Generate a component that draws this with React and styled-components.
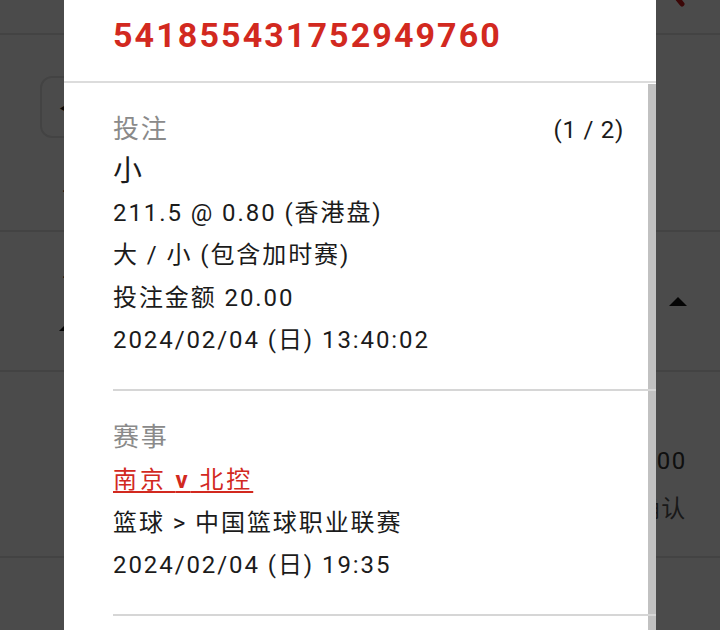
import React from "react";
import styled, { createGlobalStyle } from "styled-components";

const Global = createGlobalStyle`
  html, body { margin: 0; padding: 0; background: #fff; }
  body { font-family: Roboto, "Noto Sans CJK SC", sans-serif; overflow: hidden; }
`;

const RED = "#d2291f";

/* ---------- background page (under the dim overlay) ---------- */
const Page = styled.div`
  position: relative;
  width: 720px;
  height: 630px;
  overflow: hidden;
  background: #fff;
  color: #333;
`;

const TopBar = styled.header`
  height: 35px;
  box-sizing: border-box;
  border-bottom: 2px solid #e4e4e4;
  display: flex;
  justify-content: flex-end;
  align-items: flex-start;
  padding-right: 34px;
`;

const Row = styled.section`
  box-sizing: border-box;
  height: ${(p) => p.$h}px;
  border-bottom: 2px solid #e4e4e4;
  display: flex;
  justify-content: space-between;
  align-items: ${(p) => p.$align || "flex-start"};
  padding: ${(p) => p.$pad || "0"};
`;

const LeftCol = styled.div`
  display: flex;
  flex-direction: column;
  gap: ${(p) => p.$gap || 0}px;
  padding-left: ${(p) => p.$left || 0}px;
`;

const RightCol = styled.div`
  display: flex;
  flex-direction: column;
  align-items: flex-end;
  padding-right: 33px;
  padding-top: ${(p) => p.$top || 0}px;
  gap: 18px;
`;

const BackButton = styled.div`
  width: 90px;
  height: 62px;
  box-sizing: border-box;
  border: 2px solid #e2e2e2;
  border-radius: 12px;
  display: flex;
  align-items: center;
  padding-left: 17px;
  margin-left: 40px;
  color: #222;
  font-size: 14px;
`;

const BgText = styled.div`
  font-size: 24px;
  line-height: 30px;
  letter-spacing: 0.07em;
  color: ${(p) => p.$color || "#333"};
  padding-left: ${(p) => p.$left || 0}px;
`;

const SortArrow = styled.div`
  width: 0;
  height: 0;
  margin-left: ${(p) => p.$shift || 0}px;
  border-left: 9px solid transparent;
  border-right: 9px solid transparent;
  border-bottom: 9px solid #111;
`;

const Overlay = styled.div`
  position: absolute;
  inset: 0;
  background: rgba(0, 0, 0, 0.706);
`;

/* ---------- modal ---------- */
const Modal = styled.div`
  position: absolute;
  top: 0;
  left: 64px;
  width: 592px;
  bottom: -80px;
  background: #fff;
  display: flex;
  flex-direction: column;
  overflow: hidden;
`;

const Header = styled.div`
  padding: 15px 0 26px 49px;
  border-bottom: 2px solid #dcdcdc;
  font-size: 34px;
  line-height: 40px;
  font-weight: 700;
  letter-spacing: 2.1px;
  color: ${RED};
`;

const Body = styled.div`
  position: relative;
  flex: 1;
`;

const ScrollThumb = styled.div`
  position: absolute;
  top: 1px;
  right: 0;
  bottom: 0;
  width: 8px;
  background: #c1c1c1;
`;

const Section = styled.div`
  position: relative;
  z-index: 1;
  margin-left: 49px;
  padding: 24px 32px 27.5px 0;
  border-bottom: 2px solid #d6d6d6;
  color: #1b1b1b;
`;

const LabelRow = styled.div`
  display: flex;
  justify-content: space-between;
  align-items: baseline;
`;

const Label = styled.div`
  font-size: 26px;
  line-height: 44px;
  letter-spacing: 0.07em;
  color: #8a8a8a;
`;

const Counter = styled.div`
  font-size: 24px;
  letter-spacing: 0.03em;
`;

const Selection = styled.div`
  font-size: 29px;
  line-height: 40.5px;
`;

const Line = styled.div`
  font-size: 24px;
  line-height: 42.5px;
  letter-spacing: 0.08em;
`;

const EventLink = styled.a`
  display: block;
  width: fit-content;
  font-size: 24px;
  line-height: 42.5px;
  letter-spacing: 0.12em;
  color: ${RED};
  text-decoration: underline;
  text-decoration-thickness: 2px;
  text-underline-offset: 3px;
  & b { font-weight: 700; }
`;

function RedMark() {
  return (
    <svg width="24" height="8" viewBox="0 0 24 8" style={{ display: "block" }}>
      <path d="M12 -6 L20 4" stroke="#c81818" strokeWidth="5" strokeLinecap="round" />
    </svg>
  );
}

export default function App() {
  return (
    <>
      <Global />
      <Page>
        <TopBar>
          <RedMark />
        </TopBar>
        <Row $h={197} $pad="41px 0 0 0">
          <LeftCol $gap={48}>
            <BackButton>◀</BackButton>
            <BgText $left={62}>下注</BgText>
          </LeftCol>
        </Row>
        <Row $h={140} $align="center">
          <LeftCol $left={62} $gap={20}>
            <BgText>下注</BgText>
            <SortArrow $shift={-3} />
          </LeftCol>
          <RightCol>
            <SortArrow />
          </RightCol>
        </Row>
        <Row $h={186}>
          <LeftCol />
          <RightCol $top={74}>
            <BgText>20.00</BgText>
            <BgText $color="#555">确认</BgText>
          </RightCol>
        </Row>
        <Row $h={120} />
        <Overlay />
        <Modal>
          <Header>541855431752949760</Header>
          <Body>
            <ScrollThumb />
            <Section>
              <LabelRow>
                <Label>投注</Label>
                <Counter>(1 / 2)</Counter>
              </LabelRow>
              <Selection>小</Selection>
              <Line>211.5 @ 0.80 (香港盘)</Line>
              <Line>大 / 小 (包含加时赛)</Line>
              <Line>投注金额 20.00</Line>
              <Line>2024/02/04 (日) 13:40:02</Line>
            </Section>
            <Section>
              <Label>赛事</Label>
              <EventLink href="#">南京 <b>v</b> 北控</EventLink>
              <Line>篮球 &gt; 中国篮球职业联赛</Line>
              <Line>2024/02/04 (日) 19:35</Line>
            </Section>
          </Body>
        </Modal>
      </Page>
    </>
  );
}
